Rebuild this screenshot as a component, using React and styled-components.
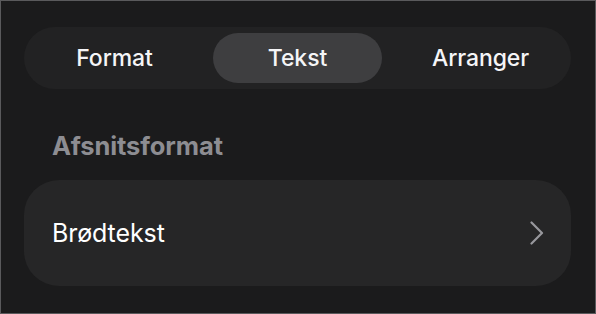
import React from "react";
import styled, { createGlobalStyle } from "styled-components";

const Global = createGlobalStyle`
  html, body { margin: 0; padding: 0; background: #1b1b1c; }
  body { font-family: Inter, "Noto Sans", sans-serif; -webkit-font-smoothing: antialiased; }
`;

const Frame = styled.div`
  box-sizing: border-box;
  width: 596px;
  height: 314px;
  background: #1b1b1c;
  border: 1px solid #5a5a5c;
  padding: 26px 24px 0 23px;
  display: flex;
  flex-direction: column;
`;

const Segmented = styled.div`
  height: 62px;
  box-sizing: border-box;
  padding: 6px;
  border-radius: 31px;
  background: #222223;
  display: grid;
  grid-template-columns: repeat(3, 1fr);
  column-gap: 14px;
`;

const Segment = styled.div`
  display: flex;
  align-items: center;
  justify-content: center;
  border-radius: 25px;
  background: ${(p) => (p.$active ? "#3e3e40" : "transparent")};
  color: #f5f5f7;
  font-size: 23px;
  font-weight: 500;
  letter-spacing: -0.1px;
`;

const SectionLabel = styled.div`
  margin: 42px 0 19px 28px;
  font-size: 25.5px;
  line-height: 30px;
  font-weight: 700;
  color: #8d8d92;
  letter-spacing: -0.1px;
`;

const Row = styled.div`
  height: 106px;
  box-sizing: border-box;
  border-radius: 35px;
  background: #262627;
  display: flex;
  align-items: center;
  justify-content: space-between;
  padding: 0 27px 0 28px;
`;

const RowLabel = styled.span`
  color: #ffffff;
  font-size: 25px;
  font-weight: 400;
  letter-spacing: -0.1px;
`;

const Chevron = () => (
  <svg width="14" height="24" viewBox="0 0 14 24" fill="none">
    <path d="M1.5 1.5 L12 12 L1.5 22.5" stroke="#98989d" strokeWidth="2.2" strokeLinecap="round" strokeLinejoin="round" />
  </svg>
);

export default function App() {
  return (
    <>
      <Global />
      <Frame>
        <Segmented>
          <Segment>Format</Segment>
          <Segment $active>Tekst</Segment>
          <Segment>Arranger</Segment>
        </Segmented>
        <SectionLabel>Afsnitsformat</SectionLabel>
        <Row>
          <RowLabel>Brødtekst</RowLabel>
          <Chevron />
        </Row>
      </Frame>
    </>
  );
}
